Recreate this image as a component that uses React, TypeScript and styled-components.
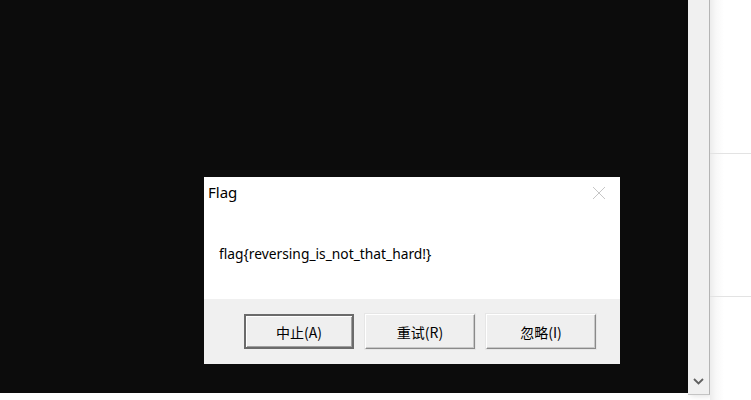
import React from "react";
import styled, { createGlobalStyle } from "styled-components";

const Global = createGlobalStyle`
  html, body { margin: 0; padding: 0; background: #ffffff; }
  body { width: 751px; height: 400px; overflow: hidden; font-family: "Noto Sans", "Noto Sans CJK SC", sans-serif; }
`;

const Screen = styled.div`
  position: relative;
  display: flex;
  width: 751px;
  height: 400px;
  background: #ffffff;
`;

const LeftColumn = styled.div`
  display: flex;
  align-items: flex-start;
  height: 394px;
`;

const Console = styled.div`
  width: 688px;
  height: 393px;
  background: #0c0c0c;
`;

const ScrollBar = styled.div`
  width: 21px;
  height: 394px;
  background: #f0f0f0;
  border-right: 1px solid #b4b4b4;
  border-bottom: 1px solid #c4c4c4;
  display: flex;
  flex-direction: column;
  justify-content: flex-end;
  align-items: center;
  box-shadow: 2px 1px 6px rgba(0, 0, 0, 0.12);
`;

const ArrowBox = styled.div`
  width: 21px;
  height: 17px;
  display: flex;
  align-items: center;
  justify-content: center;
  margin-bottom: 4px;
`;

const RightPane = styled.div`
  flex: 1;
  display: flex;
  flex-direction: column;
  padding-top: 153px;
  gap: 142px;
  background: linear-gradient(to right, #ececec 0px, #f8f8f8 6px, #ffffff 14px);
`;

const Divider = styled.div`
  height: 1px;
  background: #e3e3e3;
`;

const Dialog = styled.div`
  position: absolute;
  left: 204px;
  top: 177px;
  width: 416px;
  height: 187px;
  display: flex;
  flex-direction: column;
  background: #ffffff;
`;

const TitleBar = styled.div`
  height: 31px;
  display: flex;
  align-items: center;
  justify-content: space-between;
  padding: 0 14px 0 4px;
`;

const Title = styled.div`
  font-family: "Noto Sans", "Noto Sans CJK SC", sans-serif;
  font-size: 15px;
  color: #000000;
  line-height: 1;
  margin-top: -1px;
`;

const Body = styled.div`
  height: 91px;
  display: flex;
  align-items: center;
  padding: 0 0 0 15px;
  box-sizing: border-box;
`;

const Message = styled.div`
  font-family: "Noto Sans", "Noto Sans CJK SC", sans-serif;
  font-size: 13.8px;
  color: #000000;
`;

const ButtonBar = styled.div`
  flex: 1;
  background: #f0f0f0;
  display: flex;
  align-items: flex-start;
  padding: 15px 0 0 40px;
  gap: 11px;
`;

const DialogButton = styled.div<{ $default?: boolean }>`
  width: 110px;
  height: 35px;
  box-sizing: border-box;
  display: flex;
  align-items: center;
  justify-content: center;
  background: #efefef;
  font-family: "Noto Sans CJK SC", "Noto Sans", sans-serif;
  font-size: 14px;
  color: #000000;
  border: ${(p) => (p.$default ? "2px solid #6b6b6b" : "1px solid")};
  border-color: ${(p) =>
    p.$default ? "#6b6b6b" : "#ffffff #8a8a8a #8a8a8a #ffffff"};
  box-shadow: ${(p) =>
    p.$default
      ? "inset 1px 1px 0 #ffffff, inset -1px -1px 0 #a0a0a0"
      : "inset -1px -1px 0 #c8c8c8, 0 0 0 1px #e6e6e6"};
`;

const CloseIcon = () => (
  <svg width="14" height="14" viewBox="0 0 14 14">
    <path d="M1 1 L13 13 M13 1 L1 13" stroke="#c6c6c6" strokeWidth="1" fill="none" />
  </svg>
);

const Chevron = () => (
  <svg width="11" height="7" viewBox="0 0 11 7">
    <path d="M1 1 L5.5 5.5 L10 1" stroke="#606060" strokeWidth="1.8" fill="none" />
  </svg>
);

export default function App() {
  return (
    <>
      <Global />
      <Screen>
        <LeftColumn>
          <Console />
          <ScrollBar>
            <ArrowBox>
              <Chevron />
            </ArrowBox>
          </ScrollBar>
        </LeftColumn>
        <RightPane>
          <Divider />
          <Divider />
        </RightPane>
        <Dialog>
          <TitleBar>
            <Title>Flag</Title>
            <CloseIcon />
          </TitleBar>
          <Body>
            <Message>flag{"{"}reversing_is_not_that_hard!{"}"}</Message>
          </Body>
          <ButtonBar>
            <DialogButton $default>中止(A)</DialogButton>
            <DialogButton>重试(R)</DialogButton>
            <DialogButton>忽略(I)</DialogButton>
          </ButtonBar>
        </Dialog>
      </Screen>
    </>
  );
}
